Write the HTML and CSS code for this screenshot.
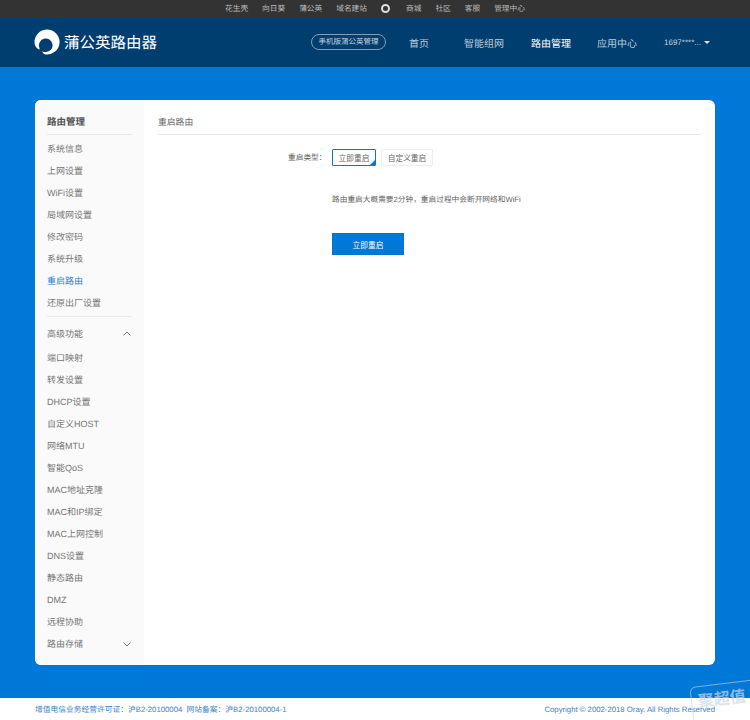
FILE: index.html
```html
<!DOCTYPE html>
<html lang="zh-CN">
<head>
  <meta charset="UTF-8" />
  <title>蒲公英路由器</title>
  <link rel="stylesheet" href="styles.css">
</head>
<body>
  <div class="topbar">
    <a href="#">花生壳</a>
    <a href="#">向日葵</a>
    <a href="#">蒲公英</a>
    <a href="#">域名建站</a>
    <span class="ring"></span>
    <a href="#">商城</a>
    <a href="#">社区</a>
    <a href="#">客服</a>
    <a href="#">管理中心</a>
  </div>
  <header class="header">
    <div class="logo">
      <svg width="26" height="26" viewBox="0 0 26 26">
        <path fill="#fff" fill-rule="evenodd" d="M13 0.5a12.5 12.5 0 1 1-1.5 24.9c-2-.3-3-1.6-3.200-3.200 1 .8 2.300 1 3.700.9a6.800 6.800 0 1 0-6.500-4.100c.3.800.2 1.300-.4 1.500C2 19.300.5 16.500.5 13A12.500 12.500 0 0 1 13 .5z"/>
      </svg>
      <span class="logo-text">蒲公英路由器</span>
    </div>
    <a class="mobile-link" href="#">手机版蒲公英管理</a>
    <nav class="nav">
      <a href="#" class="nav-home">首页</a>
      <a href="#" class="nav-net">智能组网</a>
      <a href="#" class="nav-router active">路由管理</a>
      <a href="#" class="nav-app">应用中心</a>
    </nav>
    <div class="user">1697****...<span class="caret"></span></div>
  </header>

  <main class="main">
    <div class="card">
      <aside class="sidebar">
        <h3 class="side-title">路由管理</h3>
        <ul class="side-list">
          <li>系统信息</li>
          <li>上网设置</li>
          <li>WiFi设置</li>
          <li>局域网设置</li>
          <li>修改密码</li>
          <li>系统升级</li>
          <li class="current">重启路由</li>
          <li>还原出厂设置</li>
        </ul>
        <div class="side-group">
          高级功能
          <svg width="8" height="5" viewBox="0 0 8 5"><path d="M.5 4.500 4 1l3.500 3.500" fill="none" stroke="#777" stroke-width="1"/></svg>
        </div>
        <ul class="side-list sub">
          <li>端口映射</li>
          <li>转发设置</li>
          <li>DHCP设置</li>
          <li>自定义HOST</li>
          <li>网络MTU</li>
          <li>智能QoS</li>
          <li>MAC地址克隆</li>
          <li>MAC和IP绑定</li>
          <li>MAC上网控制</li>
          <li>DNS设置</li>
          <li>静态路由</li>
          <li>DMZ</li>
          <li>远程协助</li>
          <li class="has-arrow">路由存储
            <svg width="8" height="5" viewBox="0 0 8 5"><path d="M.5.500 4 4 7.500.5" fill="none" stroke="#777" stroke-width="1"/></svg>
          </li>
        </ul>
      </aside>
      <section class="content">
        <h2 class="content-title">重启路由</h2>
        <div class="type-row">
          <span class="type-label">重启类型：</span>
          <button class="opt selected">立即重启</button>
          <button class="opt">自定义重启</button>
        </div>
        <p class="note">路由重启大概需要2分钟，重启过程中会断开网络和WiFi</p>
        <button class="submit">立即重启</button>
      </section>
    </div>
  </main>

  <footer class="footer">
    <span>增值电信业务经营许可证：沪B2-20100004&nbsp;&nbsp;网站备案：沪B2-20100004-1</span>
    <span>Copyright © 2002-2018 Oray. All Rights Reserved</span>
  </footer>
  <div class="watermark">聚超值</div>
</body>
</html>
```

FILE: styles.css
```css
* {
  box-sizing: border-box;
}

body {
  margin: 0;
  font-family: "Liberation Sans", "Noto Sans CJK SC", sans-serif;
  text-rendering: geometricPrecision;
  background: #fff;
  height: 720px;
  overflow: hidden;
  position: relative;
}

a {
  text-decoration: none;
}

.topbar {
  height: 17px;
  background: #333;
  display: flex;
  align-items: center;
  padding-left: 225px;
  gap: 14px;
  font-size: 7.700px;
}

.topbar a {
  color: #bbb;
}

.ring {
  width: 9px;
  height: 9px;
  margin-right: 2px;
  border: 2px solid #ddd;
  border-radius: 50%;
}

.header {
  height: 50px;
  background: #003e70;
  display: flex;
  align-items: center;
  padding-left: 34px;
}

.logo {
  display: flex;
  align-items: center;
  gap: 4px;
  width: 277px;
}

.logo-text {
  color: #fff;
  font-size: 15.500px;
}

.mobile-link {
  width: 75px;
  height: 16px;
  line-height: 14px;
  border: 1px solid #7f9fb8;
  border-radius: 8px;
  color: #c4d3df;
  font-size: 7.500px;
  text-align: center;
}

.nav {
  display: flex;
  font-size: 10px;
  margin-left: 23px;
  color: #b8cbd9;
}

.nav a {
  color: #b8cbd9;
}

.nav .active {
  color: #fff;
}

.nav-home {
  width: 55px;
}

.nav-net {
  width: 67px;
}

.nav-router {
  width: 66px;
}

.nav-app {
  width: 67px;
}

.user {
  color: #c4d3df;
  font-size: 8px;
  display: flex;
  align-items: center;
}

.caret {
  margin-left: 3px;
  border-left: 3px solid transparent;
  border-right: 3px solid transparent;
  border-top: 3px solid #dde6ee;
}

.main {
  height: 631px;
  background: #0078d7;
  padding: 33px 35px;
}

.card {
  height: 565px;
  background: #fff;
  border-radius: 6px;
  display: flex;
  overflow: hidden;
}

.sidebar {
  width: 109px;
  background: #fafafa;
  padding: 13px 12px 0;
  color: #777;
  font-size: 9px;
}

.side-title {
  margin: 0;
  height: 22px;
  line-height: 20px;
  font-size: 9.500px;
  color: #555;
  border-bottom: 1px solid #e8e8e8;
}

.side-list {
  list-style: none;
  margin: 0;
  padding: 3px 0 2px;
  border-bottom: 1px solid #e8e8e8;
}

.side-list li {
  height: 22px;
  line-height: 22px;
}

.side-list .current {
  color: #2a86d8;
}

.side-list.sub {
  border-bottom: none;
  padding: 0;
}

.side-group {
  height: 30px;
  line-height: 32px;
  display: flex;
  justify-content: space-between;
  align-items: center;
  padding: 3px 1px 0 0;
}

.has-arrow {
  display: flex;
  justify-content: space-between;
  align-items: center;
  padding-right: 1px;
}

.content {
  flex: 1;
  padding: 11px 14px;
  color: #666;
  font-size: 7.700px;
}

.content-title {
  margin: 0;
  height: 24px;
  line-height: 22px;
  font-size: 8.800px;
  font-weight: normal;
  color: #666;
  border-bottom: 1px solid #e8e8e8;
}

.type-row {
  display: flex;
  align-items: center;
  margin-top: 14px;
  padding-left: 130px;
}

.type-label {
  width: 44px;
}

.opt {
  width: 44px;
  height: 17px;
  margin: 0 5px 0 0;
  padding: 0;
  border: 1px solid #eee;
  background: #fff;
  font: inherit;
  color: #666;
  border-radius: 1px;
  position: relative;
}

.opt + .opt {
  width: 52px;
}

.opt.selected {
  border: 1.500px solid #0078d7;
  overflow: hidden;
}

.opt.selected::after {
  content: "";
  position: absolute;
  right: 0;
  bottom: 0;
  border-left: 5px solid transparent;
  border-bottom: 5px solid #0078d7;
}

.note {
  margin: 28px 0 0 174px;
  line-height: 12px;
}

.submit {
  display: block;
  margin: 27px 0 0 174px;
  width: 72px;
  height: 22px;
  border: none;
  background: #0078d7;
  color: #fff;
  font: inherit;
}

.footer {
  height: 22px;
  display: flex;
  justify-content: space-between;
  align-items: center;
  padding: 0 35px;
  font-size: 7.750px;
  color: #3b82cc;
}

.watermark {
  position: absolute;
  left: 692px;
  top: 683px;
  width: 66px;
  height: 48px;
  padding: 5px 0 0 6px;
  font-size: 16px;
  line-height: 22px;
  font-weight: bold;
  color: rgba(205, 215, 225, 0.7);
  border: 1.500px solid rgba(205, 212, 220, 0.6);
  border-radius: 6px;
  transform: rotate(-7deg);
}
```
